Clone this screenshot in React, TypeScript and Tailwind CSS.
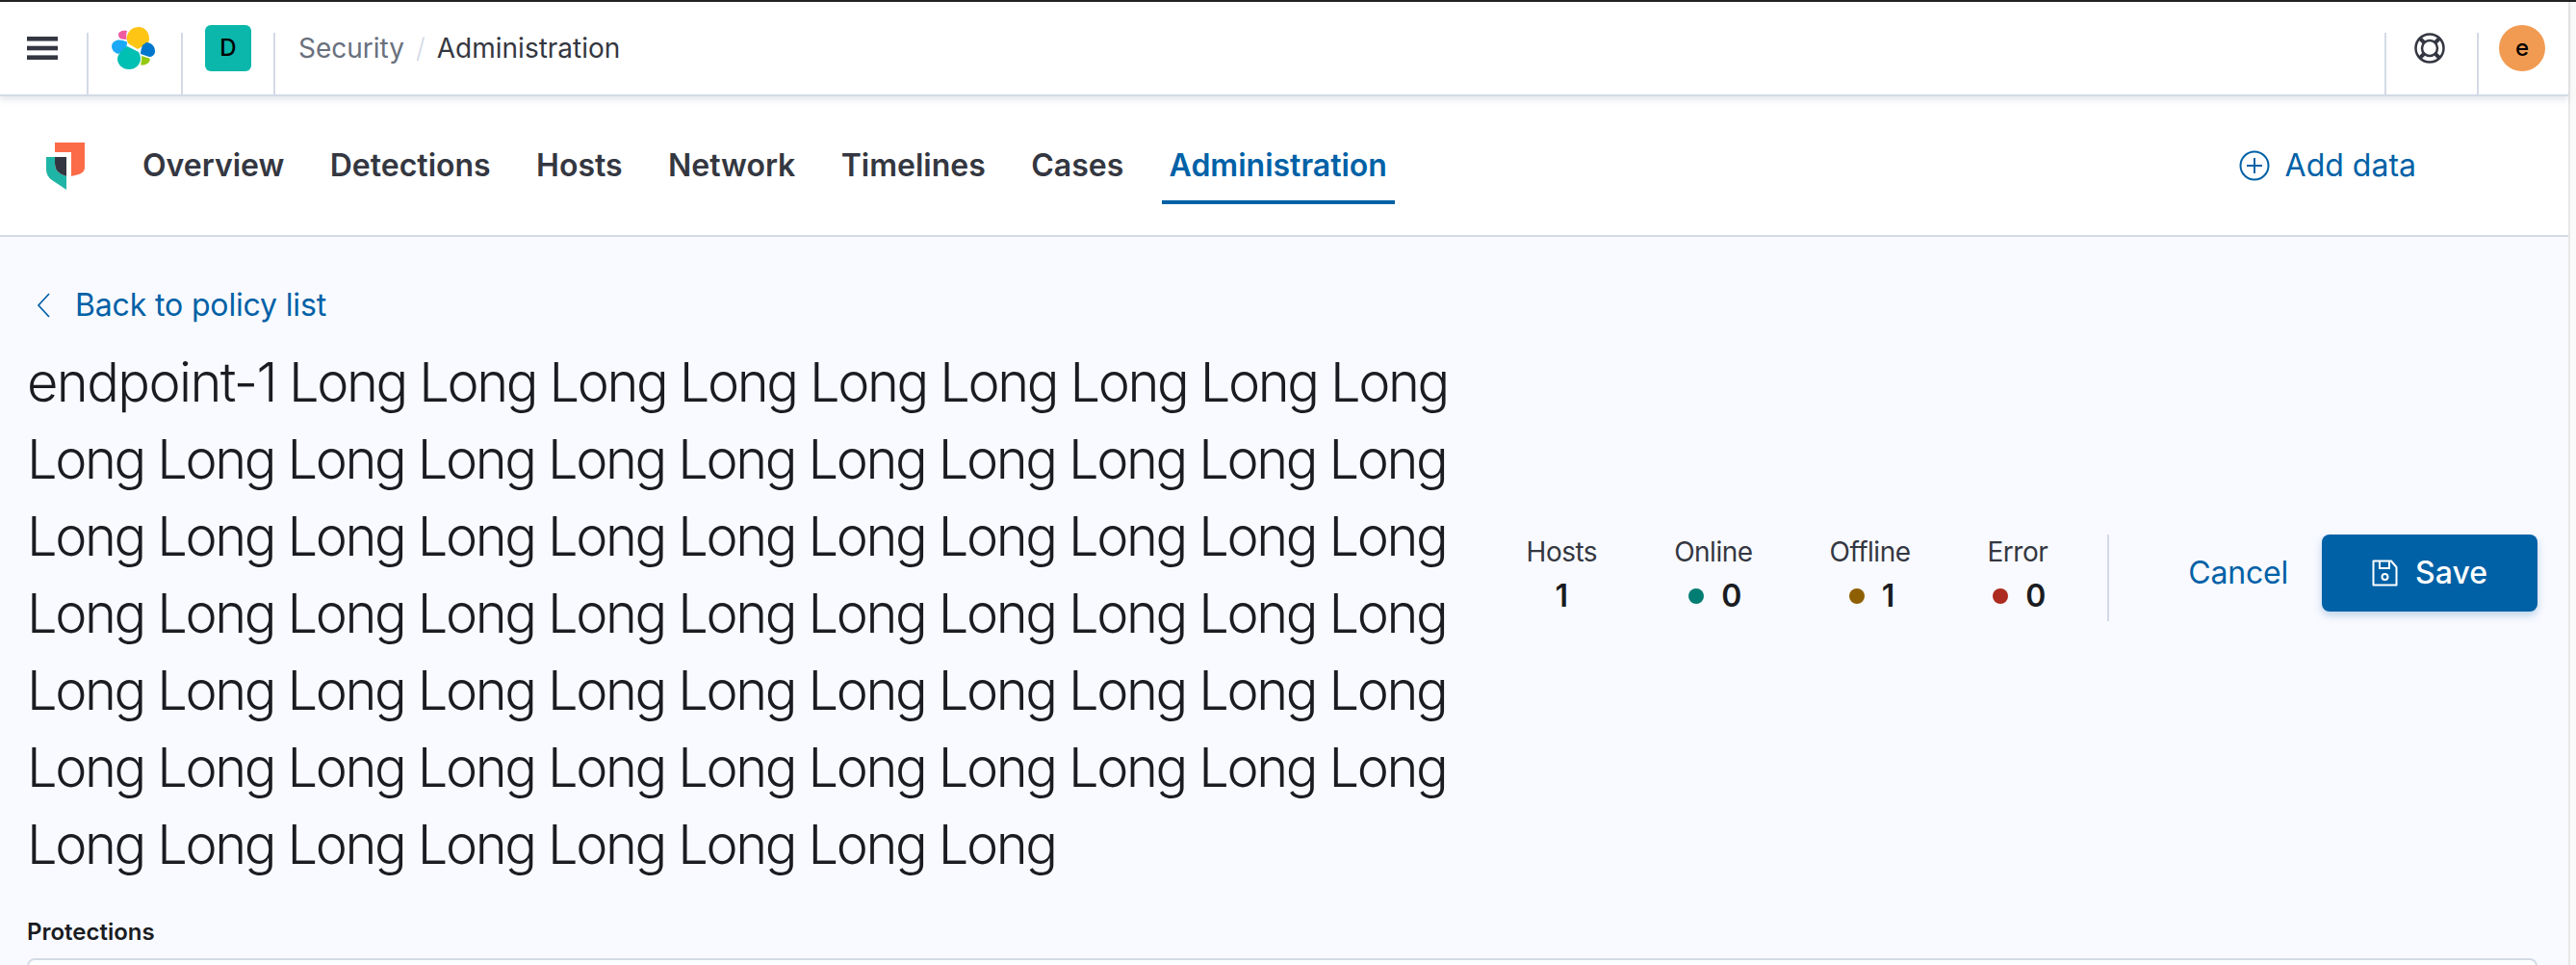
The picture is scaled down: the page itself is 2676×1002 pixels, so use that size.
const tabs = ['Overview', 'Detections', 'Hosts', 'Network', 'Timelines', 'Cases', 'Administration'];

const stats = [
  { label: 'Hosts', value: '1', dot: '' },
  { label: 'Online', value: '0', dot: 'bg-[#017d73]' },
  { label: 'Offline', value: '1', dot: 'bg-[#8f5f04]' },
  { label: 'Error', value: '0', dot: 'bg-[#ac2a1f]' },
];

const firstLine = Array(9).fill('Long').join(' ');
const otherLines = Array(63).fill('Long').join(' ');

const MenuIcon = () => (
  <svg width="32" height="24" viewBox="0 0 32 24" fill="#343741">
    <rect x="0" y="0" width="32" height="4.6" />
    <rect x="0" y="9.7" width="32" height="4.6" />
    <rect x="0" y="19.4" width="32" height="4.6" />
  </svg>
);

const ElasticLogo = () => (
  <svg width="45" height="44" viewBox="0 0 45 44">
    <path d="M16 9C18 3 23 0 28 0C35 0 39 6 39 12C39 15 38 17 36 18L27 23L17 17C16 14 15 12 16 9Z" fill="#fec514" />
    <path d="M7 8C7 5 11 3 16 4C15 7 15 10 15.5 13L10 12.5C8 12 7 10 7 8Z" fill="#ef5ba1" />
    <path d="M5 14C8 13 12 14 16 15.5C16 18 15.5 20 15 22L7 28C3 27 0 24 0 20C0 17 2 15 5 14Z" fill="#1ba9f5" />
    <path d="M36 16C41 16 45 20 45 25C45 29 42 31 39 31L30 28C30 25 31 22 32 19Z" fill="#0077cc" />
    <path d="M16 20L28 26C29.5 29 30 31 30 33C30 39 25 44 18 44C11 44 6 39 6 33C6 30 8 27 10 25Z" fill="#00bfb3" />
    <path d="M31 30L39 32.5C40 33 40 35 39 36C37 39 33 40 30 39.5C31 36 31.5 33 31 30Z" fill="#93c90e" />
  </svg>
);

const SecurityLogo = () => (
  <svg width="40" height="49" viewBox="0 0 40 49">
    <path d="M9 0H40V26Q40 31 34 33L26 35V10H9Z" fill="#fc6b47" />
    <path d="M0 15H9V22Q9 32 21 35V49L6 39Q0 35 0 28Z" fill="#1fb5a6" />
    <path d="M9 15H21V35Q9 32 9 22Z" fill="#343741" />
  </svg>
);

const HelpIcon = () => (
  <svg width="32" height="32" viewBox="0 0 32 32" fill="none" stroke="#343741">
    <circle cx="16" cy="16" r="14.5" strokeWidth="2.5" />
    <circle cx="16" cy="16" r="8" strokeWidth="2.5" />
    <path d="M6 6L10.5 10.5M26 6L21.5 10.5M6 26L10.5 21.5M26 26L21.5 21.5" strokeWidth="4" />
  </svg>
);

const SaveIcon = () => (
  <svg width="27" height="28" viewBox="0 0 27 28" fill="none" stroke="#fff" strokeWidth="2">
    <path d="M1.5 1.5H20L25.5 8V26.5H1.5Z" strokeLinejoin="round" />
    <path d="M8 1.5V9H18V1.5" />
    <circle cx="13.5" cy="18" r="3" />
  </svg>
);

const AddIcon = () => (
  <svg width="32" height="32" viewBox="0 0 32 32" fill="none" stroke="#0061a6" strokeWidth="2">
    <circle cx="16" cy="16" r="14.5" />
    <path d="M16 8V24M8 16H24" />
  </svg>
);

const Divider = () => <div className="w-[2px] mt-[32px] bg-[#d3dae6]" />;

const App = () => {
  return (
    <div className="w-[2676px] h-[1002px] overflow-hidden flex flex-col bg-white font-['Inter',sans-serif] text-[#343741]">
      <div className="h-[2px] bg-[#222222]" />
      <div className="flex flex-1 min-h-0">
        <div className="flex-1 min-w-0 flex flex-col">
          {/* top bar */}
          <header className="h-[98px] flex border-b-2 border-[#d3dae6] shadow-[0_4px_6px_rgba(152,162,179,0.25)] relative z-10 bg-white">
            <div className="w-[90px] pl-[28px] flex items-center">
              <MenuIcon />
            </div>
            <Divider />
            <div className="w-[96px] pl-[24px] flex items-center">
              <ElasticLogo />
            </div>
            <Divider />
            <div className="w-[94px] pl-[23px] flex items-center">
              <div className="w-[48px] h-[48px] rounded-[6px] bg-[#0bb7aa] flex items-center justify-center text-[24px] font-medium text-black">D</div>
            </div>
            <Divider />
            <div className="flex-1 flex items-center pl-[24px] text-[28px]">
              <span className="text-[#69707d]">Security</span>
              <span className="mx-[12px] text-[#d3dae6] font-light">/</span>
              <span className="text-[#343741]">Administration</span>
            </div>
            <Divider />
            <div className="w-[94px] pr-[4px] flex items-center justify-center">
              <HelpIcon />
            </div>
            <Divider />
            <div className="w-[93px] pr-[3px] flex items-center justify-center">
              <div className="w-[48px] h-[48px] rounded-full bg-[#f19b52] flex items-center justify-center text-[24px] font-medium text-black">e</div>
            </div>
          </header>

          {/* nav */}
          <nav className="h-[146px] flex items-center border-b-2 border-[#d3dae6] pl-[48px] pr-[158px] bg-white">
            <SecurityLogo />
            <div className="flex ml-[52px] gap-[31.4px] text-[32px] font-semibold flex-1">
              {tabs.map((t) => (
                <div
                  key={t}
                  className={
                    t === 'Administration'
                      ? 'px-[8px] h-[84px] pt-[7px] mb-[4px] flex items-center border-b-4 border-[#0061a6] text-[#0061a6]'
                      : 'px-[8px] h-[84px] pt-[7px] mb-[4px] flex items-center border-b-4 border-transparent'
                  }
                >
                  {t}
                </div>
              ))}
            </div>
            <div className="flex items-center gap-[16px] text-[32px] text-[#0061a6]">
              <AddIcon />
              <span>Add data</span>
            </div>
          </nav>

          {/* page */}
          <main className="flex-1 min-h-0 bg-[#f9faff] pl-[28px] pr-[32px] pt-[47px]">
            <div className="flex justify-between">
              <div className="w-[1500px]">
                <div className="h-[48px] flex items-center pl-[8px] gap-[22px] text-[32px] tracking-[-0.15px] text-[#0061a6]">
                  <svg width="20" height="28" viewBox="0 0 20 28" fill="none" stroke="#0061a6" strokeWidth="1.7">
                    <path d="M15 2L4 14L15 26" />
                  </svg>
                  <span>Back to policy list</span>
                </div>
                <h1 className="mt-[16px] text-[56px] leading-[80px] font-light tracking-[-2.4px] text-[#1a1c21]">
                  <div className="flex gap-[13px]">
                    <span className="tracking-[-1.6px]">endpoint-1</span>
                    <span>{firstLine}</span>
                  </div>
                  <div>{otherLines}</div>
                </h1>
              </div>
              <div className="self-center pb-[11px] flex items-center">
                <div className="flex gap-[80px] pb-[6px]">
                  {stats.map((s) => (
                    <div key={s.label} className="flex flex-col items-center gap-[8px]">
                      <div className="text-[28px] leading-[36px] tracking-[-0.5px] text-[#343741]">{s.label}</div>
                      <div
                        className={
                          s.dot
                            ? 'flex items-center gap-[18px] pl-[4px] text-[32px] leading-[40px] font-semibold text-[#1a1c21]'
                            : 'flex items-center text-[32px] leading-[40px] font-semibold text-[#1a1c21]'
                        }
                      >
                        {s.dot && <span className={`w-[16px] h-[16px] rounded-full ${s.dot}`} />}
                        {s.value}
                      </div>
                    </div>
                  ))}
                </div>
                <div className="w-[2px] h-[90px] bg-[#d3dae6] ml-[62px] mr-[82px]" />
                <div className="self-start h-[80px] flex items-center">
                  <span className="text-[32px] tracking-[-0.2px] text-[#0061a6] mr-[35px]">Cancel</span>
                  <button className="w-[224px] h-[80px] rounded-[8px] bg-[#0061a6] text-white text-[32px] font-medium flex items-center justify-center gap-[18px] shadow-[0_4px_8px_rgba(0,97,166,0.25)]">
                    <SaveIcon />
                    Save
                  </button>
                </div>
              </div>
            </div>
            <div className="mt-[35px] text-[24px] leading-[32px] font-semibold text-[#1a1c21]">Protections</div>
            <div className="mt-[11px] h-[40px] rounded-[8px] border-2 border-[#d3dae6] bg-white" />
          </main>
        </div>
        <div className="w-[8px] border-l-2 border-[#e8e8e8] bg-[#fafafa]" />
      </div>
    </div>
  );
};

export default App;
